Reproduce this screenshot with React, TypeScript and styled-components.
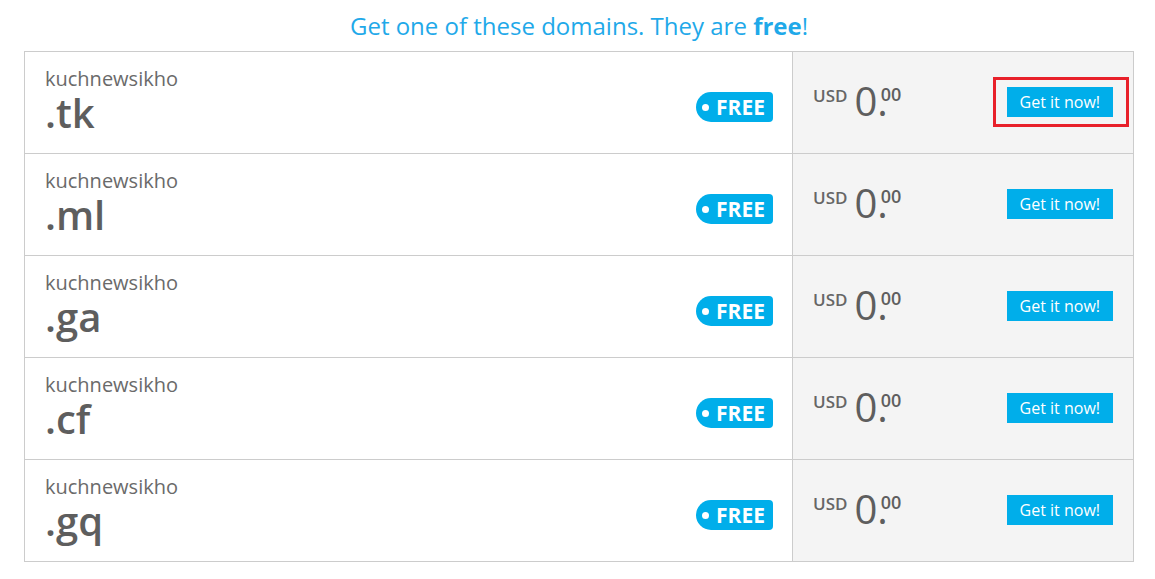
import React from "react";
import styled, { createGlobalStyle } from "styled-components";

const GlobalStyle = createGlobalStyle`
  body {
    margin: 0;
    background: #fff;
    font-family: "Open Sans", "Liberation Sans", sans-serif;
  }
`;

const Page = styled.div`
  width: 1110px;
  margin-left: 24px;
  padding-top: 9px;
`;

const Heading = styled.h2`
  margin: 0 0 8px;
  text-align: center;
  font-size: 24px;
  font-weight: 400;
  line-height: 34px;
  color: #1fa9e9;

  strong {
    font-weight: 700;
  }
`;

const Table = styled.div`
  border: 1px solid #cccccc;
  border-bottom: none;
`;

const DomainRow = styled.div`
  display: grid;
  grid-template-columns: 1fr 340px;
  height: 101px;
  border-bottom: 1px solid #cccccc;
`;

const NameCell = styled.div`
  display: flex;
  align-items: center;
  justify-content: space-between;
  padding: 0 19px 0 20px;
  border-right: 1px solid #cccccc;
`;

const NameBlock = styled.div`
  display: flex;
  flex-direction: column;
  margin-bottom: 4px;
`;

const Name = styled.span`
  font-size: 20px;
  line-height: 24px;
  color: #6a6a6a;
`;

const Tld = styled.span`
  font-size: 40px;
  font-weight: 600;
  line-height: 44px;
  color: #5e5e5e;
`;

const FreeBadge = styled.span`
  display: flex;
  align-items: center;
  gap: 7px;
  height: 30px;
  padding: 0 8px 0 6px;
  margin-top: 9px;
  border-radius: 15px 4px 4px 15px;
  background: #00aeea;
  color: #fff;
  font-size: 21px;
  font-weight: 700;
  line-height: 30px;

  &::before {
    content: "";
    width: 7px;
    height: 7px;
    border-radius: 50%;
    background: #fff;
  }
`;

const PriceCell = styled.div`
  display: flex;
  align-items: center;
  justify-content: space-between;
  padding: 0 20px;
  background: #f4f4f4;
`;

const Price = styled.div`
  display: flex;
  align-items: flex-start;
  height: 40px;
  margin-bottom: 3px;
  color: #5e5e5e;
`;

const Currency = styled.span`
  font-size: 17px;
  font-weight: 600;
  line-height: 20px;
  margin-top: 5px;
  margin-right: 7px;
  color: #666;
`;

const Whole = styled.span`
  font-size: 40px;
  line-height: 40px;
`;

const Cents = styled.span`
  font-size: 18px;
  font-weight: 600;
  line-height: 20px;
  margin-left: -7px;
  margin-top: 3px;
`;

const BuyButton = styled.button<{ $highlight?: boolean }>`
  position: relative;
  height: 30px;
  padding: 0 13px;
  margin-bottom: 2px;
  border: none;
  border-radius: 0;
  background: #00aeea;
  color: #fff;
  font-family: "Open Sans", "Liberation Sans", sans-serif;
  font-size: 16px;
  cursor: pointer;

  ${({ $highlight }) =>
    $highlight &&
    `
    &::after {
      content: "";
      position: absolute;
      top: -10px;
      bottom: -10px;
      left: -14px;
      right: -16px;
      border: 3px solid #e8202a;
    }
  `}
`;

const domains = [".tk", ".ml", ".ga", ".cf", ".gq"];

export default function App() {
  return (
    <>
      <GlobalStyle />
      <Page>
        <Heading>
          Get one of these domains. They are <strong>free</strong>!
        </Heading>
        <Table>
          {domains.map((tld, i) => (
            <DomainRow key={tld}>
              <NameCell>
                <NameBlock>
                  <Name>kuchnewsikho</Name>
                  <Tld>{tld}</Tld>
                </NameBlock>
                <FreeBadge>FREE</FreeBadge>
              </NameCell>
              <PriceCell>
                <Price>
                  <Currency>USD</Currency>
                  <Whole>0.</Whole>
                  <Cents>00</Cents>
                </Price>
                <BuyButton $highlight={i === 0}>Get it now!</BuyButton>
              </PriceCell>
            </DomainRow>
          ))}
        </Table>
      </Page>
    </>
  );
}
